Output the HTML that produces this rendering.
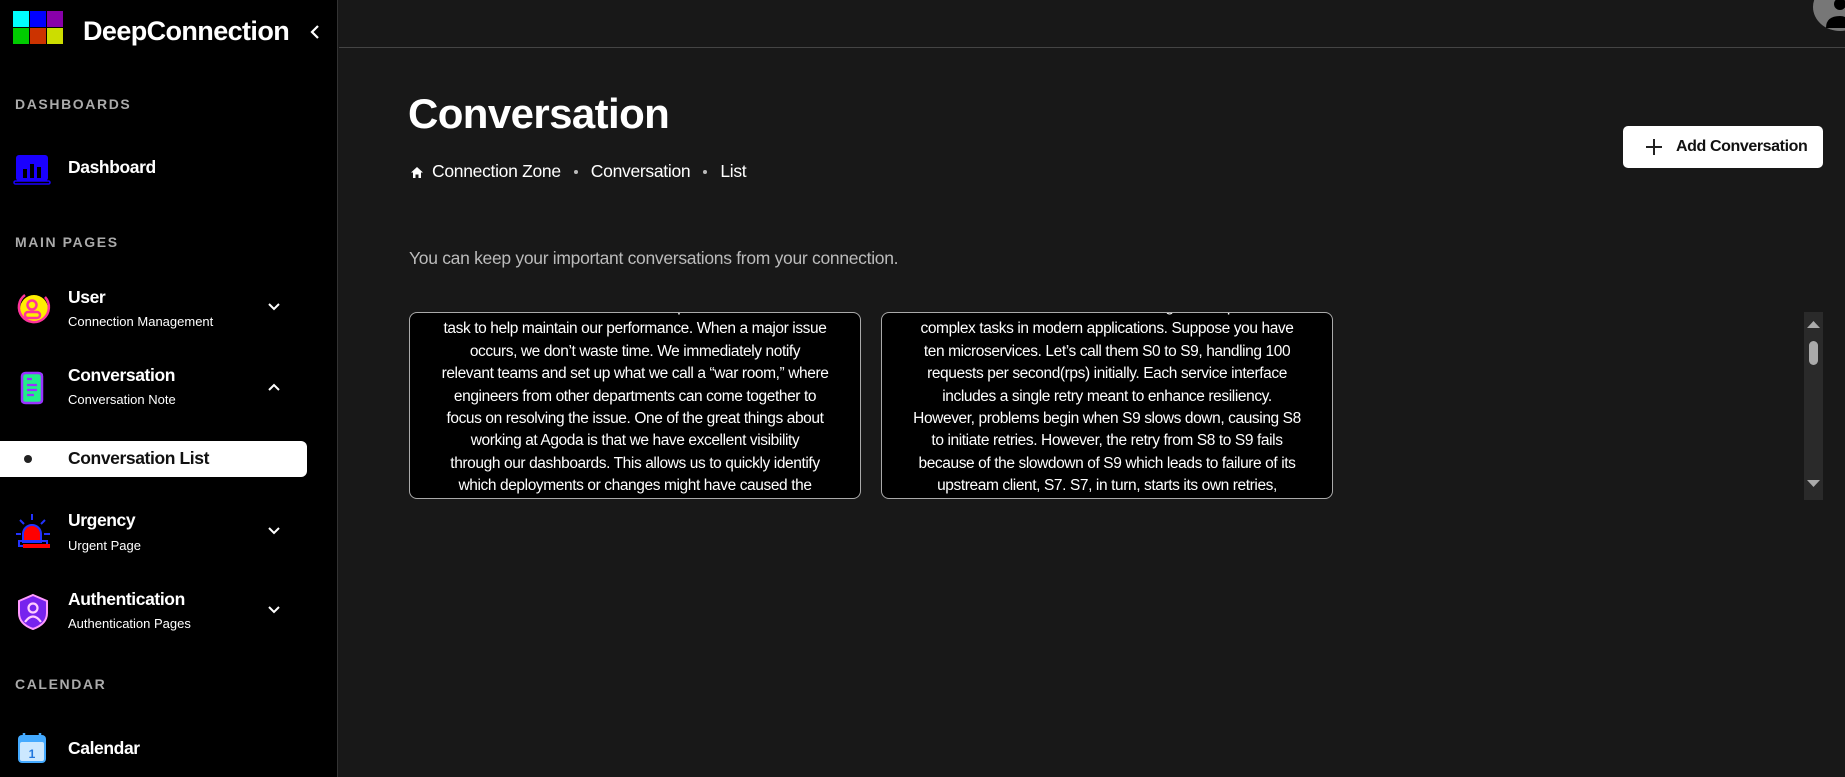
<!DOCTYPE html>
<html><head><meta charset="utf-8">
<style>
*{margin:0;padding:0;box-sizing:border-box}
body{width:1845px;height:777px;background:#181818;font-family:"Liberation Sans",sans-serif;color:#fff;position:relative;overflow:hidden}
.sb{position:absolute;left:0;top:0;width:338px;height:777px;background:#000;border-right:1px solid #333}
.abs{position:absolute}
.sec{position:absolute;left:15px;font-size:14px;font-weight:bold;letter-spacing:1.6px;color:#aaa}
.t{position:absolute;left:68px;font-size:17.5px;font-weight:bold;letter-spacing:-0.4px}
.s{position:absolute;left:68px;font-size:13px;color:#fff}
.chev{position:absolute;left:267px;width:14px;height:14px}
.card{position:absolute;top:312px;height:187px;width:452px;background:#000;border:1px solid #aaa;border-radius:8px;overflow:hidden}
.card p{position:absolute;left:10px;right:10px;text-align:center;font-size:15.5px;line-height:22.4px;letter-spacing:-0.4px;color:#fff}
</style></head><body>
<div class="sb">
  <svg class="abs" style="left:13px;top:11px" width="50" height="34">
    <rect x="0" y="0" width="16" height="16" fill="#00ffff"/><rect x="17" y="0" width="16" height="16" fill="#0000ff"/><rect x="34" y="0" width="16" height="16" fill="#8800aa"/>
    <rect x="0" y="17" width="16" height="16" fill="#00cc00"/><rect x="17" y="17" width="16" height="16" fill="#cc3300"/><rect x="34" y="17" width="16" height="16" fill="#ccdd00"/>
  </svg>
  <div class="abs" style="left:83px;top:16px;font-size:27px;font-weight:bold;letter-spacing:-0.6px">DeepConnection</div>
  <svg class="abs" style="left:308px;top:24px" width="14" height="16"><path d="M10 2 L4 8 L10 14" stroke="#fff" stroke-width="2.2" fill="none"/></svg>

  <div class="sec" style="top:96px">DASHBOARDS</div>
  <svg class="abs" style="left:13px;top:154px" width="38" height="32"><rect x="3" y="1" width="32" height="26" rx="3" fill="#1a00ff"/><rect x="1" y="27" width="36" height="3" rx="1.5" fill="none" stroke="#1a00ff" stroke-width="1.5"/><rect x="10" y="15" width="4" height="9" fill="#000"/><rect x="17" y="10" width="4" height="14" fill="#000"/><rect x="24" y="13" width="4" height="11" fill="#000"/></svg>
  <div class="t" style="top:157px">Dashboard</div>

  <div class="sec" style="top:234px">MAIN PAGES</div>
  <svg class="abs" style="left:15px;top:290px" width="36" height="36"><circle cx="19" cy="19" r="14" fill="#ffee00"/><path d="M10 5 A15 15 0 1 0 30 7" stroke="#ff3399" stroke-width="2.5" fill="none"/><circle cx="17" cy="15" r="4.5" stroke="#ff3399" stroke-width="2.5" fill="none"/><rect x="10" y="22" width="15" height="6" rx="3" stroke="#ff3399" stroke-width="2.5" fill="none"/></svg>
  <div class="t" style="top:287px">User</div>
  <div class="s" style="top:314px">Connection Management</div>
  <svg class="chev" style="top:300px" viewBox="0 0 14 14"><path d="M2 4 L7 9 L12 4" stroke="#fff" stroke-width="2" fill="none"/></svg>

  <svg class="abs" style="left:18px;top:370px" width="30" height="36"><rect x="5" y="3" width="20" height="29" rx="2" fill="#22ee88"/><path d="M8 3 H20 Q24 3 24 7 V30 Q24 33 20 33 H8 Q4 33 4 30 V7 Q4 3 8 3" stroke="#9933ff" stroke-width="2.5" fill="none"/><path d="M9 9h5M9 15h10M9 20h10M9 25h7" stroke="#9933ff" stroke-width="2.2"/></svg>
  <div class="t" style="top:365px">Conversation</div>
  <div class="s" style="top:392px">Conversation Note</div>
  <svg class="chev" style="top:380px" viewBox="0 0 14 14"><path d="M2 10 L7 5 L12 10" stroke="#fff" stroke-width="2" fill="none"/></svg>

  <div class="abs" style="left:0;top:441px;width:307px;height:36px;background:#fff;border-radius:0 6px 6px 0"></div>
  <div class="abs" style="left:24px;top:455px;width:8px;height:8px;border-radius:50%;background:#222"></div>
  <div class="t" style="top:448px;color:#111">Conversation List</div>

  <svg class="abs" style="left:14px;top:512px" width="38" height="38"><path d="M18 2v6M6 8l4 4M31 8l-4 4M2 22h5M30 22h6" stroke="#2233ff" stroke-width="2"/><path d="M9 30 V22 A9 9 0 0 1 27 22 V30Z" fill="#ff0000" stroke="#2233ff" stroke-width="2"/><rect x="5" y="29" width="28" height="5" fill="none" stroke="#2233ff" stroke-width="2"/><rect x="9" y="32" width="27" height="4" fill="#ff0000"/></svg>
  <div class="t" style="top:510px">Urgency</div>
  <div class="s" style="top:538px">Urgent Page</div>
  <svg class="chev" style="top:524px" viewBox="0 0 14 14"><path d="M2 4 L7 9 L12 4" stroke="#fff" stroke-width="2" fill="none"/></svg>

  <svg class="abs" style="left:16px;top:593px" width="34" height="38"><path d="M17 2 L31 8 V20 Q31 31 17 36 Q3 31 3 20 V8Z" fill="#7722ee" stroke="#ff99ff" stroke-width="2"/><circle cx="17" cy="15" r="4.5" stroke="#ffccff" stroke-width="2.2" fill="none"/><path d="M9 29 Q17 18 25 29" stroke="#ffccff" stroke-width="2.2" fill="none"/></svg>
  <div class="t" style="top:589px">Authentication</div>
  <div class="s" style="top:616px">Authentication Pages</div>
  <svg class="chev" style="top:603px" viewBox="0 0 14 14"><path d="M2 4 L7 9 L12 4" stroke="#fff" stroke-width="2" fill="none"/></svg>

  <div class="sec" style="top:676px">CALENDAR</div>
  <svg class="abs" style="left:17px;top:732px" width="30" height="32"><rect x="1" y="3" width="28" height="28" rx="4" fill="#44aaff"/><rect x="3" y="10" width="24" height="19" rx="2" fill="#cce8ff"/><path d="M7 1v5M23 1v5" stroke="#44aaff" stroke-width="2.5"/><text x="15" y="26" font-size="12" font-weight="bold" fill="#2277dd" text-anchor="middle" font-family="Liberation Sans">1</text></svg>
  <div class="t" style="top:738px">Calendar</div>
</div>

<div class="abs" style="left:339px;top:47px;width:1506px;height:1px;background:#444"></div>
<div class="abs" style="left:1813px;top:-17px;width:54px;height:48px;border-radius:50%;background:#777"></div>
<svg class="abs" style="left:1820px;top:0" width="25" height="30"><circle cx="20" cy="4" r="6" fill="#000"/><path d="M6 28 Q6 16 20 16 Q30 16 30 28Z" fill="#000"/></svg>

<div class="abs" style="left:408px;top:90px;font-size:42px;font-weight:bold;letter-spacing:-0.6px">Conversation</div>
<svg class="abs" style="left:411px;top:167px" width="12" height="11"><path d="M6 0 L12 5.5 H10 V11 H7.5 V7.5 H4.5 V11 H2 V5.5 H0Z" fill="#fff"/></svg>
<div class="abs" style="left:432px;top:161px;font-size:17.5px;letter-spacing:-0.3px;white-space:nowrap">Connection Zone<span style="display:inline-block;width:4px;height:4px;background:#bbb;border-radius:50%;margin:0 13px;vertical-align:middle"></span>Conversation<span style="display:inline-block;width:4px;height:4px;background:#bbb;border-radius:50%;margin:0 13px;vertical-align:middle"></span>List</div>
<div class="abs" style="left:409px;top:248px;font-size:17.5px;color:#bbb;letter-spacing:-0.3px">You can keep your important conversations from your connection.</div>

<div class="abs" style="left:1623px;top:126px;width:200px;height:42px;background:#fff;border-radius:5px"></div>
<svg class="abs" style="left:1645px;top:138px" width="18" height="18"><path d="M9 1v16M1 9h16" stroke="#222" stroke-width="2"/></svg>
<div class="abs" style="left:1676px;top:138px;font-size:16px;font-weight:bold;color:#111;letter-spacing:-0.4px">Add Conversation</div>

<div class="card" style="left:409px"><p style="top:-17px">to ensure smooth and efficient operations, is a core<br>task to help maintain our performance. When a major issue<br>occurs, we don’t waste time. We immediately notify<br>relevant teams and set up what we call a “war room,” where<br>engineers from other departments can come together to<br>focus on resolving the issue. One of the great things about<br>working at Agoda is that we have excellent visibility<br>through our dashboards. This allows us to quickly identify<br>which deployments or changes might have caused the<br>problem and fix it quickly.</p></div>
<div class="card" style="left:881px"><p style="top:-17px">Microservices often have to work together to perform<br>complex tasks in modern applications. Suppose you have<br>ten microservices. Let’s call them S0 to S9, handling 100<br>requests per second(rps) initially. Each service interface<br>includes a single retry meant to enhance resiliency.<br>However, problems begin when S9 slows down, causing S8<br>to initiate retries. However, the retry from S8 to S9 fails<br>because of the slowdown of S9 which leads to failure of its<br>upstream client, S7. S7, in turn, starts its own retries,<br>further burdening the system at the same time.</p></div>

<div class="abs" style="left:1804px;top:312px;width:19px;height:188px;background:#2a2a2a"></div>
<svg class="abs" style="left:1804px;top:318px" width="19" height="180"><path d="M3 10 L9.5 3 L16 10Z" fill="#aaa"/><rect x="5" y="23" width="9" height="24" rx="4.5" fill="#aaa"/><path d="M3 162 L9.5 169 L16 162Z" fill="#aaa"/></svg>
</body></html>
